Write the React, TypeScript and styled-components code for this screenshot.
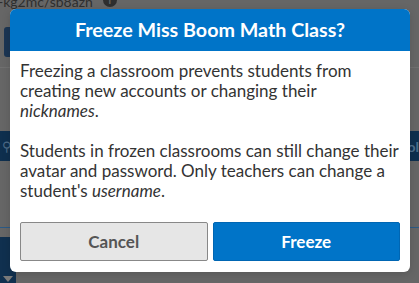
import React from 'react';
import styled, { createGlobalStyle } from 'styled-components';

const GlobalStyle = createGlobalStyle`
  html, body {
    margin: 0;
    padding: 0;
    background: #666666;
  }
  body {
    font-family: Lato, "Open Sans", sans-serif;
    width: 419px;
    height: 283px;
    overflow: hidden;
  }
`;

const App: React.FC = () => {
  return (
    <>
      <GlobalStyle />
      <Page>
        <TopBar>
          <UrlText>-kg2mc/sb8azn</UrlText>
          <InfoDot>i</InfoDot>
        </TopBar>
        <ToolRow>
          <DimButton />
        </ToolRow>
        <Rule />
        <TableHead>
          <KeyMark>&#9906;</KeyMark>
          <HeadTail>ol</HeadTail>
        </TableHead>
        <BlueRule />
        <SideColumn>
          <SortArrow />
        </SideColumn>
      </Page>

      <Modal role="dialog">
        <Header>Freeze Miss Boom Math Class?</Header>
        <Body>
          <Paragraph>
            Freezing a classroom prevents students from creating new accounts or changing their
            <br />
            <em>nicknames</em>.
          </Paragraph>
          <Paragraph>
            Students in frozen classrooms can still change their avatar and password. Only teachers
            can change a student's <em>username</em>.
          </Paragraph>
          <Actions>
            <ActionButton>Cancel</ActionButton>
            <ActionButton primary>Freeze</ActionButton>
          </Actions>
        </Body>
      </Modal>
    </>
  );
};

const Page = styled.div`
  position: relative;
  width: 419px;
  height: 283px;
  display: flex;
  flex-direction: column;
`;

const TopBar = styled.div`
  height: 26px;
  display: flex;
  align-items: flex-start;
  gap: 10px;
  margin-left: -2px;
`;

const UrlText = styled.span`
  margin-top: -6px;
  font-family: Lato, sans-serif;
  font-size: 14px;
  line-height: 16px;
  color: #2e2e2e;
`;

const InfoDot = styled.span`
  margin-top: -7px;
  width: 14px;
  height: 14px;
  border-radius: 50%;
  background: #2e2e2e;
  color: #666;
  font-size: 10px;
  font-weight: 700;
  line-height: 14px;
  text-align: center;
`;

const ToolRow = styled.div`
  height: 32px;
  padding-left: 4px;
  margin-top: 1px;
`;

const DimButton = styled.div`
  width: 30px;
  height: 30px;
  border-radius: 3px;
  background: #1b3553;
`;

const Rule = styled.div`
  margin-top: 8px;
  height: 1px;
  background: #707070;
`;

const TableHead = styled.div`
  margin-top: 63px;
  height: 30px;
  background: #0e2f4e;
  display: flex;
  justify-content: space-between;
  align-items: center;
  color: #4c6a86;
`;

const KeyMark = styled.span`
  padding-left: 2px;
  font-size: 13px;
`;

const HeadTail = styled.span`
  font-size: 14px;
  font-weight: 700;
  color: #50708c;
`;

const BlueRule = styled.div`
  margin-top: 66px;
  height: 1px;
  background: #2b5a86;
`;

const SideColumn = styled.div`
  margin-top: 9px;
  width: 16px;
  flex: 1;
  background: #10304f;
  display: flex;
  align-items: flex-end;
  justify-content: center;
`;

const SortArrow = styled.div`
  width: 0;
  height: 0;
  border-left: 5px solid transparent;
  border-right: 5px solid transparent;
  border-top: 6px solid #7a7a7a;
  margin-bottom: 1px;
`;

const Modal = styled.div`
  position: absolute;
  left: 10px;
  top: 9px;
  width: 400px;
  background: #ffffff;
  border-radius: 6px;
  overflow: hidden;
  box-shadow: 0 2px 8px rgba(0, 0, 0, 0.15);
`;

const Header = styled.div`
  height: 42px;
  background: #0074c8;
  color: #ffffff;
  font-family: Lato, sans-serif;
  font-weight: 700;
  font-size: 19.7px;
  line-height: 42px;
  text-align: center;
`;

const Body = styled.div`
  padding: 10px 10px 11px;
  color: #333333;
  font-family: Lato, sans-serif;
  font-size: 17px;
  line-height: 20px;
`;

const Paragraph = styled.p`
  margin: 0 0 20px;

  &:last-of-type {
    margin-bottom: 21px;
  }

  em {
    font-style: italic;
  }
`;

const Actions = styled.div`
  display: grid;
  grid-template-columns: 1fr 1fr;
  gap: 5px;
`;

const ActionButton = styled.button<{ primary?: boolean }>`
  height: 39px;
  border-radius: 2px;
  border: 1px solid ${(p) => (p.primary ? '#0066b3' : '#888888')};
  background: ${(p) => (p.primary ? '#0074c8' : '#e6e6e6')};
  color: ${(p) => (p.primary ? '#ffffff' : '#555555')};
  font-family: Lato, sans-serif;
  font-weight: 700;
  font-size: 17px;
  cursor: pointer;
`;

export default App;
